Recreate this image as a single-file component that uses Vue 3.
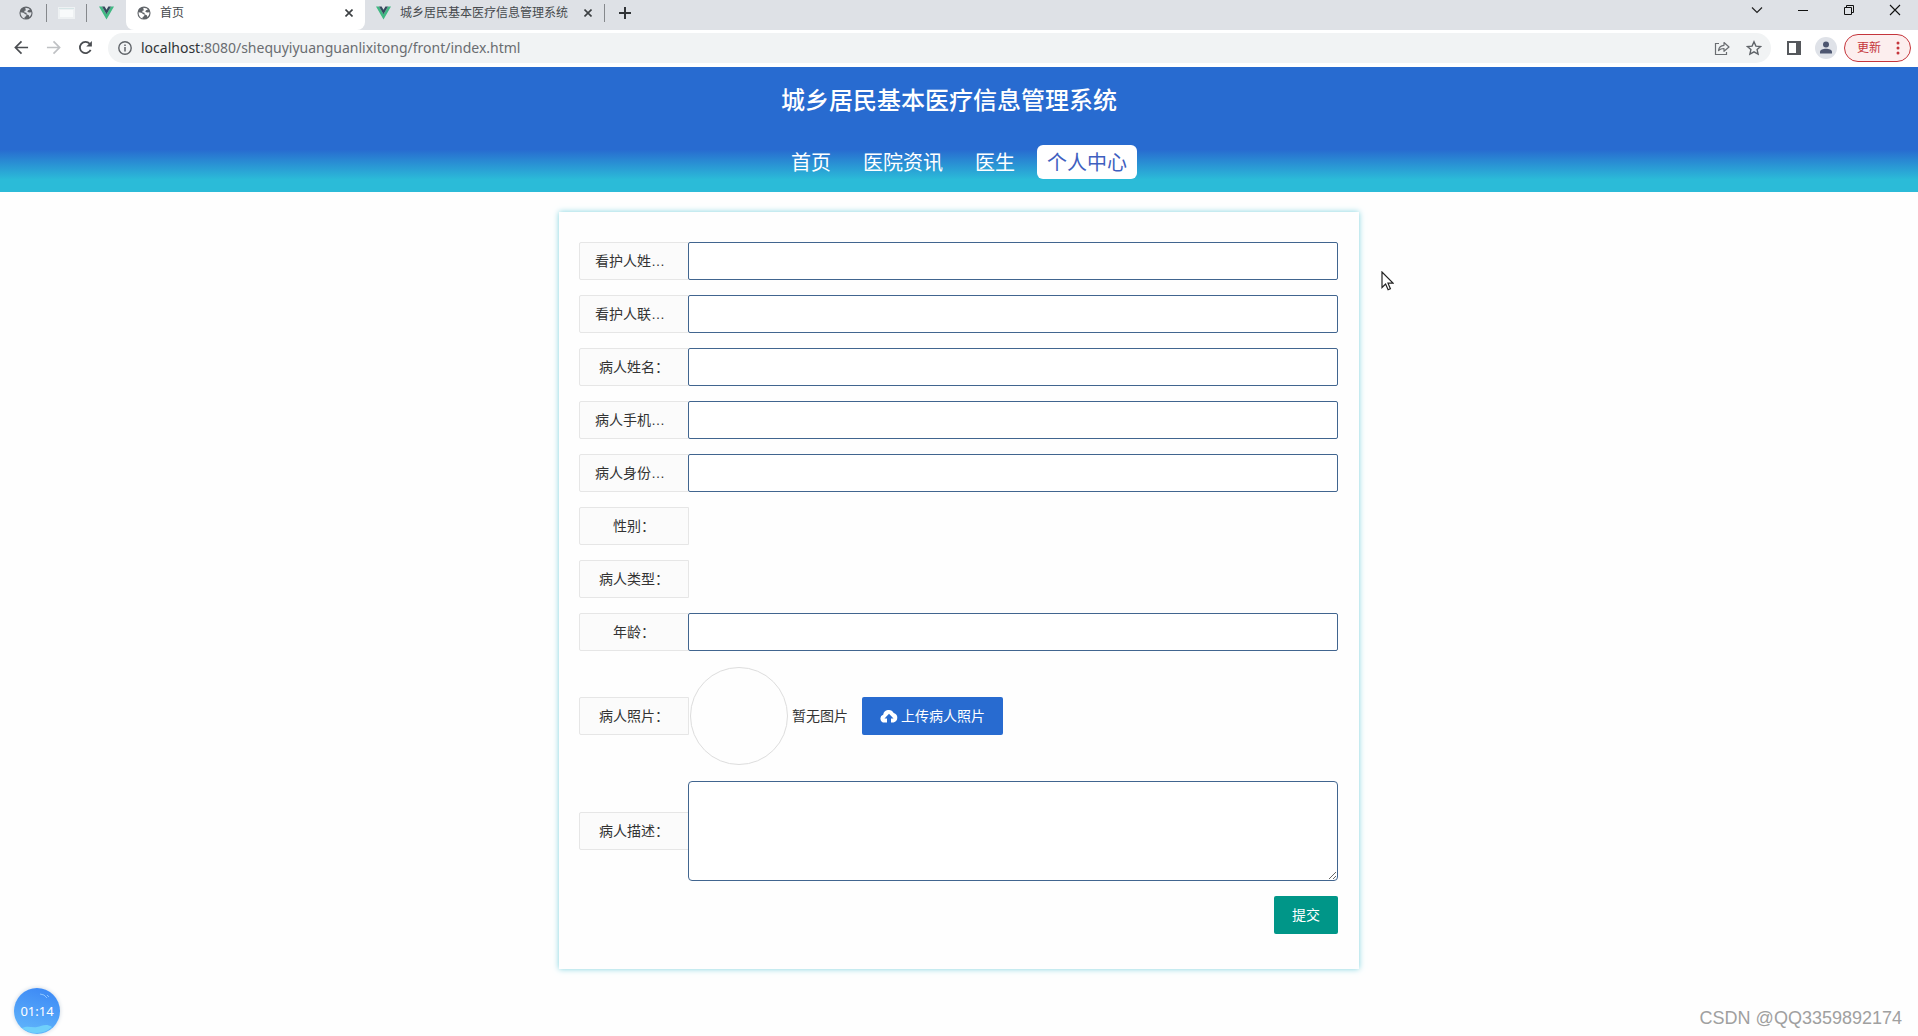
<script setup>
import { ref } from 'vue'

const navItems = [
  { text: '首页', active: false },
  { text: '医院资讯', active: false },
  { text: '医生', active: false },
  { text: '个人中心', active: true },
]

const fields = ref([
  { id: 'guardian-name', label: '看护人姓…', kind: 'input', long: true, value: '' },
  { id: 'guardian-phone', label: '看护人联…', kind: 'input', long: true, value: '' },
  { id: 'patient-name', label: '病人姓名：', kind: 'input', value: '' },
  { id: 'patient-phone', label: '病人手机…', kind: 'input', long: true, value: '' },
  { id: 'patient-idcard', label: '病人身份…', kind: 'input', long: true, value: '' },
  { id: 'gender', label: '性别：', kind: 'empty' },
  { id: 'patient-type', label: '病人类型：', kind: 'empty' },
  { id: 'age', label: '年龄：', kind: 'input', value: '' },
])

const description = ref('')
</script>

<template>
  <div class="screen">
    <div class="tab-strip">
      <div class="pinned">
        <svg class="globe" viewBox="0 0 16 16"><circle cx="8" cy="8" r="7.5" fill="#5f6368" /><path d="M1.800 7.200l3.200.6 2.200 1.500 1.600.5-.8 2-1.500.8-.3 1.800C3.500 13.500 1.600 10.800 1.800 7.200zM7.500 2l3.800.8 1 1.600-2 .4-.8 1.900 2 .8 2.700-.3c.2 2.300-.8 4.200-2.400 5.300l-.6-2-2-.8-.9-1.900-2.300-.6.3-1.700 1.800-.6-.9-1.400z" fill="#dee1e6" /></svg>
      </div>
      <div class="pinned ruled">
        <svg class="sheet" viewBox="0 0 17 12"><rect width="17" height="12" fill="#eef1f3" /><rect x="2" y="3" width="13" height="7" fill="#f8fafb" /><path d="M1 1.500h15" stroke="#d6e5e6" /></svg>
      </div>
      <div class="pinned ruled">
        <svg class="vue-logo" viewBox="0 0 16 14"><path d="M0 0h3.200L8 8.300 12.800 0H16L8 14z" fill="#41b883" /><path d="M3.200 0H6l2 3.500L10 0h2.800L8 8.300z" fill="#35495e" /></svg>
      </div>
      <div class="tab active">
        <svg class="globe" viewBox="0 0 16 16"><circle cx="8" cy="8" r="7.5" fill="#5f6368" /><path d="M1.800 7.200l3.200.6 2.200 1.500 1.600.5-.8 2-1.500.8-.3 1.800C3.500 13.500 1.600 10.800 1.800 7.200zM7.500 2l3.800.8 1 1.600-2 .4-.8 1.900 2 .8 2.700-.3c.2 2.300-.8 4.200-2.400 5.300l-.6-2-2-.8-.9-1.900-2.300-.6.3-1.700 1.800-.6-.9-1.400z" fill="#fff" /></svg>
        <span class="tab-title">首页</span>
        <button class="tab-close" type="button" aria-label="关闭"><svg viewBox="0 0 8 8"><path d="M0.500 0.500l7 7M7.500 0.500l-7 7" stroke="#3c4043" stroke-width="1.600" /></svg></button>
      </div>
      <div class="tab">
        <svg class="vue-logo" viewBox="0 0 16 14"><path d="M0 0h3.200L8 8.300 12.800 0H16L8 14z" fill="#41b883" /><path d="M3.200 0H6l2 3.500L10 0h2.800L8 8.300z" fill="#35495e" /></svg>
        <span class="tab-title">城乡居民基本医疗信息管理系统</span>
        <button class="tab-close" type="button" aria-label="关闭"><svg viewBox="0 0 8 8"><path d="M0.500 0.500l7 7M7.500 0.500l-7 7" stroke="#3c4043" stroke-width="1.600" /></svg></button>
      </div>
      <button class="new-tab" type="button" aria-label="新标签页"><svg viewBox="0 0 12 12"><path d="M6 0v12M0 6h12" stroke="#303336" stroke-width="2" /></svg></button>
      <div class="window-controls">
        <button type="button" aria-label="搜索标签页"><svg viewBox="0 0 12 12"><path d="M1 3.500l5 5 5-5" fill="none" stroke="#222" stroke-width="1.200" /></svg></button>
        <button type="button" aria-label="最小化"><svg viewBox="0 0 12 12"><path d="M1 6.500h10" stroke="#111" /></svg></button>
        <button type="button" aria-label="还原"><svg viewBox="0 0 12 12"><path d="M1.500 3.500h7v7h-7zM3.500 3.500v-2h7v7h-2" fill="none" stroke="#111" /></svg></button>
        <button type="button" aria-label="关闭窗口"><svg viewBox="0 0 12 12"><path d="M1 1l10 10M11 1L1 11" stroke="#111" stroke-width="1.100" /></svg></button>
      </div>
    </div>

    <div class="toolbar">
      <button class="tool" type="button" aria-label="后退"><svg viewBox="0 0 16 16"><path d="M15 8H2M8 1.500L1.500 8 8 14.500" fill="none" stroke="#4a4d51" stroke-width="1.800" /></svg></button>
      <button class="tool" type="button" aria-label="前进"><svg viewBox="0 0 16 16"><path d="M1 8h13M8 1.500L14.500 8 8 14.500" fill="none" stroke="#bfc1c4" stroke-width="1.800" /></svg></button>
      <button class="tool" type="button" aria-label="刷新"><svg viewBox="0 0 16 16"><path d="M13.500 10.500A6 6 0 1 1 12.500 4" fill="none" stroke="#4a4d51" stroke-width="1.900" /><path d="M14.800 1v6h-6z" fill="#4a4d51" /></svg></button>
      <div class="omnibox">
        <svg class="info" viewBox="0 0 14 14"><circle cx="7" cy="7" r="6.200" fill="none" stroke="#5f6368" stroke-width="1.400" /><path d="M7 6v4.500M7 3.500v1.500" stroke="#5f6368" stroke-width="1.500" /></svg>
        <span class="url"><b>localhost</b>:8080/shequyiyuanguanlixitong/front/index.html</span>
        <svg class="share" viewBox="0 0 16 16"><path d="M5 3.500H1.500v11h11V12" fill="none" stroke="#6a6d71" stroke-width="1.200" /><path d="M4.500 10.500C5 7 7 5.500 10 5.300V2.500L15 7l-5 4.300V8.500C7.500 8.500 6 9 4.500 10.500z" fill="none" stroke="#6a6d71" stroke-width="1.200" stroke-linejoin="round" /></svg>
        <svg class="star" viewBox="0 0 16 16"><path d="M8 1.800l1.900 4.300 4.700.4-3.500 3.100 1 4.600L8 11.800l-4.100 2.400 1-4.600L1.400 6.500l4.700-.4z" fill="none" stroke="#5f6368" stroke-width="1.400" /></svg>
      </div>
      <svg class="panel" viewBox="0 0 14 14"><path d="M0 0h14v14H0zM2 2v10h7V2z" fill="#55585c" fill-rule="evenodd" /></svg>
      <svg class="avatar" viewBox="0 0 22 22"><circle cx="11" cy="11" r="11" fill="#dfe2e8" /><circle cx="11" cy="7.500" r="3" fill="#4d5670" /><path d="M5 16.500v-1.500c0-2 3-3.200 6-3.200s6 1.200 6 3.200v1.500z" fill="#4d5670" /></svg>
      <button class="update" type="button">更新<svg viewBox="0 0 4 14"><circle cx="2" cy="2" r="1.500" /><circle cx="2" cy="7" r="1.500" /><circle cx="2" cy="12" r="1.500" /></svg></button>
    </div>

    <header class="site-header">
      <h1>城乡居民基本医疗信息管理系统</h1>
      <nav>
        <a v-for="item in navItems" :key="item.text" href="#" :class="{ active: item.active }">{{ item.text }}</a>
      </nav>
    </header>

    <form class="card" @submit.prevent>
      <div v-for="field in fields" :key="field.id" class="row">
        <template v-if="field.kind === 'input'">
          <label class="caption" :class="{ long: field.long }" :for="field.id">{{ field.label }}</label>
          <input :id="field.id" v-model="field.value" type="text" />
        </template>
        <span v-else class="caption">{{ field.label }}</span>
      </div>
      <div class="row">
        <label class="caption" for="upload">病人照片：</label>
        <div class="photo"></div>
        <span class="photo-note">暂无图片</span>
        <button id="upload" class="upload" type="button">
          <svg viewBox="0 0 18 14"><path d="M4.500 13.500a4 4 0 0 1-1.300-7.800A5.600 5.600 0 0 1 13.700 4a4.900 4.900 0 0 1-.2 9.500H11V9.500h2.500L9 4.800 4.500 9.500H7v4z" fill="#fff" /></svg>上传病人照片
        </button>
      </div>
      <div class="row">
        <label class="caption" for="description">病人描述：</label>
        <textarea id="description" v-model="description"></textarea>
      </div>
      <div class="actions">
        <button class="submit" type="submit">提交</button>
      </div>
    </form>

    <svg class="pointer" viewBox="0 0 13 20"><path d="M1 1v15.500l3.600-3.400 2.500 5.600 2.300-1-2.400-5.500h5z" fill="#fff" stroke="#222" stroke-width="1.200" /></svg>
    <div class="timer">
      <svg viewBox="0 0 46 46"><path d="M26 6l4 1 3 3M33 7l2 2" fill="none" stroke="#8cc4ff" /><path d="M8 40c6-3 10 0 15-1s9-4 15 0a23 23 0 0 1-30 1z" fill="#6fd0fb" /></svg>
      <span>01:14</span>
    </div>
    <div class="watermark">CSDN @QQ3359892174</div>
  </div>
</template>

<style>
body {
  margin: 0;
}
</style>

<style scoped>
.screen {
  position: relative;
  box-sizing: border-box;
  min-height: 100vh;
  overflow: hidden;
  background: #fefefe;
  color: #333;
  font: 14px/20px "Noto Sans", "Noto Sans CJK SC", sans-serif;
}
.screen * {
  box-sizing: border-box;
}
svg {
  display: block;
  flex: none;
}
button {
  border: 0;
  padding: 0;
  background: none;
  font: inherit;
}

.tab-strip {
  display: flex;
  height: 30px;
  padding-left: 6px;
  background: #dee1e6;
  font-size: 12px;
}
.pinned {
  display: flex;
  align-items: center;
  justify-content: center;
  width: 40px;
  height: 26px;
}
.pinned.ruled {
  background: linear-gradient(#85888c, #85888c) 0 4px / 1px 18px no-repeat;
}
.globe {
  width: 14px;
  height: 14px;
}
.vue-logo {
  width: 15px;
  height: 14px;
}
.sheet {
  width: 17px;
  height: 12px;
}
.tab {
  display: flex;
  align-items: center;
  width: 239px;
  height: 26px;
  padding: 0 12px 0 11px;
}
.tab.active {
  height: 30px;
  padding-bottom: 4px;
  border-radius: 0 0 8px 8px;
  background: #fff;
}
.tab-title {
  flex: 1;
  margin-left: 9px;
  color: #45494d;
  white-space: nowrap;
}
.tab-close svg {
  width: 8px;
  height: 8px;
}
.new-tab {
  height: 26px;
  padding-left: 15px;
  background: linear-gradient(#85888c, #85888c) 0 4px / 1px 18px no-repeat;
}
.new-tab svg {
  width: 12px;
  height: 12px;
}
.window-controls {
  display: flex;
  margin-left: auto;
}
.window-controls button {
  display: flex;
  justify-content: center;
  width: 46px;
  height: 20px;
  padding-top: 4px;
}
.window-controls svg {
  width: 12px;
  height: 12px;
}

.toolbar {
  display: flex;
  align-items: center;
  height: 37px;
  padding: 0 7px 2px 5px;
  background: #fff;
}
.tool {
  display: flex;
  justify-content: center;
  width: 32px;
}
.tool svg {
  width: 15px;
  height: 15px;
}
.omnibox {
  display: flex;
  flex: 1;
  align-items: center;
  height: 30px;
  margin: 0 16px 0 7px;
  padding: 0 9px 0 10px;
  border-radius: 15px;
  background: #f1f3f4;
}
.info {
  width: 14px;
  height: 14px;
}
.url {
  flex: 1;
  margin-left: 9px;
  color: #6a6d71;
}
.url b {
  color: #303336;
  font-weight: 400;
}
.share,
.star {
  width: 16px;
  height: 16px;
}
.star {
  margin-left: 16px;
}
.panel {
  width: 14px;
  height: 14px;
}
.avatar {
  width: 22px;
  height: 22px;
  margin: 0 7px 0 14px;
}
.update {
  display: flex;
  align-items: center;
  justify-content: space-between;
  width: 67px;
  height: 28px;
  padding: 0 10px 0 12px;
  border: 1px solid #c5353b;
  border-radius: 14px;
  background: #fceeee;
  color: #c5353b;
  font-size: 12px;
}
.update svg {
  width: 4px;
  height: 14px;
  fill: #c5353b;
}

.site-header {
  display: flex;
  flex-direction: column;
  align-items: center;
  height: 125px;
  background: linear-gradient(#286bd0 66%, #2bbbd8 90%);
}
h1 {
  margin: 18px 20px 0 0;
  color: #fff;
  font-size: 24px;
  font-weight: 500;
  line-height: 30px;
}
nav {
  display: flex;
  gap: 12px;
  margin-top: 30px;
}
nav a {
  padding: 2px 10px 0;
  border-radius: 6px;
  color: #fff;
  font-size: 20px;
  line-height: 32px;
  text-decoration: none;
}
nav a.active {
  background: #fff;
  color: #3f5fbf;
}

.card {
  display: flex;
  flex-direction: column;
  gap: 15px;
  width: 800px;
  max-width: 100%;
  margin: 20px auto;
  padding: 30px 21px 35px 20px;
  background: #fefefe;
  box-shadow: 0 0 6px #7fd4e0;
}
.row {
  display: flex;
  align-items: center;
}
.caption {
  flex: none;
  width: 110px;
  height: 38px;
  padding: 8px 15px;
  border: 1px solid #e6e6e6;
  border-radius: 2px 0 0 2px;
  background: #fbfbfb;
  font-family: "Liberation Sans", "Noto Sans CJK SC", sans-serif;
  text-align: center;
  white-space: nowrap;
}
.caption.long {
  text-align: left;
}
.row input,
.row textarea {
  flex: 1;
  min-width: 0;
  height: 38px;
  margin-left: -1px;
  padding: 0 10px;
  border: 1px solid #41658f;
  border-radius: 2px;
  outline: 0;
  background: #fff;
  font: inherit;
}
.row textarea {
  height: 100px;
  padding: 6px 10px;
  border-radius: 4px;
  resize: vertical;
}
.photo {
  width: 98px;
  height: 98px;
  margin: 1px;
  border: 1px solid #ddd;
  border-radius: 50%;
}
.photo-note {
  margin: 0 14px 0 3px;
}
.upload {
  display: flex;
  align-items: center;
  gap: 3px;
  height: 38px;
  padding: 0 18px;
  border-radius: 2px;
  background: #286bd0;
  color: #fff;
}
.upload svg {
  width: 18px;
  height: 14px;
}
.actions {
  display: flex;
  justify-content: flex-end;
}
.submit {
  height: 38px;
  padding: 0 18px;
  border-radius: 2px;
  background: #009688;
  color: #fff;
}

.pointer {
  position: absolute;
  top: 271px;
  left: 1381px;
  width: 13px;
  height: 20px;
}
.timer {
  position: absolute;
  bottom: 2px;
  left: 14px;
  display: grid;
  place-items: center;
  width: 46px;
  height: 46px;
  border-radius: 50%;
  background: linear-gradient(15deg, #63b8fb, #3a86f5);
  box-shadow: 0 0 4px #c9d4e0;
  color: #fff;
  font-size: 13px;
}
.timer > * {
  grid-area: 1 / 1;
}
.timer svg {
  width: 46px;
  height: 46px;
}
.watermark {
  position: absolute;
  right: 16px;
  bottom: 8px;
  color: #a0a0a0;
  font: 18px/20px "Liberation Sans", sans-serif;
}
</style>
